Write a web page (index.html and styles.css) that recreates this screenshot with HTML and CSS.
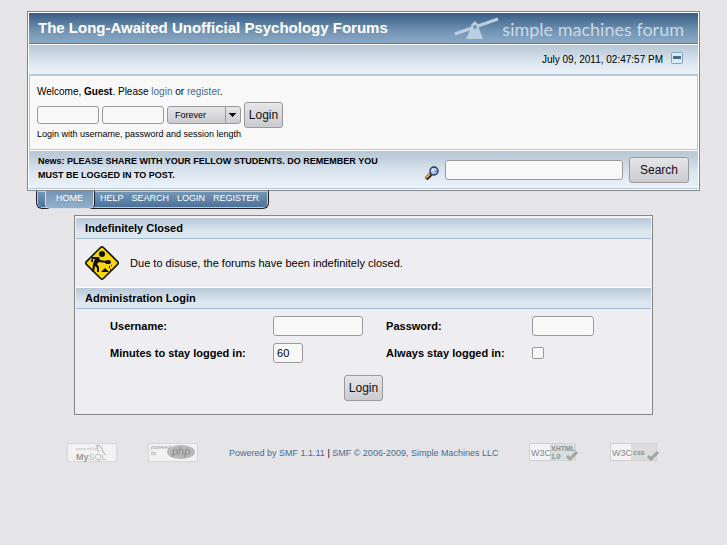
FILE: index.html
```html
<!DOCTYPE html>
<html lang="en">
<head>
    <meta charset="UTF-8">
    <meta name="viewport" content="width=device-width, initial-scale=1.0">
    <title>The Long-Awaited Unofficial Psychology Forums</title>
    <link rel="stylesheet" href="styles.css">
</head>
<body>
    <!-- Header -->
    <div class="tborder header">
        <div class="catbg">
            <h1>The Long-Awaited Unofficial Psychology Forums</h1>
            <div class="smf-logo">
                <svg width="46" height="24" viewBox="0 0 46 24" aria-hidden="true">
                    <path d="M1 17 L44 2" stroke="#bccfe0" stroke-width="3"/>
                    <path d="M18 9 L24 9 L29 22 L12 22 Z" fill="#bccfe0"/>
                    <path d="M17 8 L21 4 L24 8 Z" fill="#bccfe0"/>
                    <circle cx="21" cy="10" r="4" fill="#bccfe0"/>
                    <circle cx="21" cy="10" r="2" fill="#7294b3"/>
                </svg>
                <span>simple machines forum</span>
            </div>
        </div>
        <div class="titlebg2 datebar">
            <span>July 09, 2011, 02:47:57 PM</span>
            <a href="#" class="upshrink" aria-label="Shrink or expand the header">
                <svg width="12" height="12" viewBox="0 0 12 12">
                    <rect x="0.5" y="0.5" width="11" height="11" rx="1" fill="#dce8f3" stroke="#83a2bd"/>
                    <rect x="2" y="4" width="8" height="3" fill="#476c8e"/>
                </svg>
            </a>
        </div>
        <form class="userarea" action="#">
            <p class="welcome">Welcome, <b>Guest</b>. Please <a href="#">login</a> or <a href="#">register</a>.</p>
            <div class="quicklogin">
                <input type="text" class="text quick" aria-label="Username">
                <input type="password" class="text quick" aria-label="Password">
                <select aria-label="Session length">
                    <option>Forever</option>
                </select>
                <button type="submit" class="btn">Login</button>
            </div>
            <p class="hint">Login with username, password and session length</p>
        </form>
        <div class="titlebg2 newsbar">
            <p class="news">News: PLEASE SHARE WITH YOUR FELLOW STUDENTS. DO REMEMBER YOU MUST BE LOGGED IN TO POST.</p>
            <form class="search" action="#">
                <svg width="14" height="20" viewBox="0 -6 14 20" aria-hidden="true">
                    <path d="M1 13 L6 8" stroke="#222" stroke-width="4"/>
                    <path d="M1 12 L5 8" stroke="#e8a14c" stroke-width="2"/>
                    <circle cx="9" cy="5" r="4" fill="#a9c9f3" stroke="#26354f" stroke-width="1.4"/>
                    <path d="M7 5 Q7 3 9 3" stroke="#fff" fill="none"/>
                    <path d="M10 7 L12 4" stroke="#4d7bd1"/>
                </svg>
                <input type="text" class="text query" aria-label="Search">
                <button type="submit" class="btn search-btn">Search</button>
            </form>
        </div>
    </div>

    <!-- Menu -->
    <nav class="menu">
        <a href="#" class="active">HOME</a>
        <a href="#">HELP</a>
        <a href="#">SEARCH</a>
        <a href="#">LOGIN</a>
        <a href="#">REGISTER</a>
    </nav>

    <!-- Maintenance notice -->
    <form class="tborder maintenance" action="#">
        <h2 class="titlebg">Indefinitely Closed</h2>
        <div class="notice">
            <svg width="36" height="36" viewBox="0 0 36 36" aria-hidden="true">
                <rect x="6" y="6" width="24" height="24" rx="2" transform="rotate(45 18 18)" fill="#f7d708" stroke="#111" stroke-width="1.6"/>
                <circle cx="18" cy="9" r="3" fill="#111"/>
                <path d="M8 12 H15 L16 15 L22 16 V18 L15 17 L13 19 L15 22 V27 H13 V23 L11 21 L10 27 H8 L9 19 L11 14 H9 V17 H7 Z" fill="#111"/>
                <ellipse cx="24" cy="17" rx="3" ry="2" fill="#111"/>
                <path d="M17 27 L19 25 L21 23 L23 25 L25 27 Z" fill="#111"/>
                <path d="M25 21h1v2h-1z M27 20h1v1h-1z M26 24h1v1h-1z" fill="#111"/>
            </svg>
            <p>Due to disuse, the forums have been indefinitely closed.</p>
        </div>
        <h2 class="titlebg">Administration Login</h2>
        <div class="fields">
            <label for="user">Username:</label>
            <div><input type="text" id="user" class="text user"></div>
            <label for="passwrd">Password:</label>
            <div><input type="password" id="passwrd" class="text passwrd"></div>
            <label for="minutes">Minutes to stay logged in:</label>
            <div><input type="text" id="minutes" class="text minutes" value="60"></div>
            <label for="always">Always stay logged in:</label>
            <div><input type="checkbox" id="always" class="check"></div>
        </div>
        <div class="submit">
            <button type="submit" class="btn">Login</button>
        </div>
    </form>

    <!-- Footer -->
    <footer class="footer">
        <a href="#" aria-label="Powered by MySQL">
            <svg width="50" height="19" viewBox="0 0 50 19">
                <rect x="0.5" y="0.5" width="49" height="18" fill="#f2f2f3" stroke="#d6d6d8"/>
                <text x="9" y="7" class="small" fill="#bbb">powered by</text>
                <text x="9" y="17" class="mysql"><tspan font-weight="bold" fill="#999">My</tspan><tspan fill="#bbb">SQL</tspan></text>
                <path d="M30 2 Q35 3 36 9 L39 12 M30 2 Q30 7 32 9" stroke="#aaa" fill="none"/>
            </svg>
        </a>
        <a href="#" aria-label="Powered by PHP">
            <svg width="50" height="19" viewBox="0 0 50 19">
                <rect x="0.5" y="0.5" width="49" height="18" fill="#f2f2f3" stroke="#d6d6d8"/>
                <text x="3" y="6" class="tiny" fill="#999">powered</text>
                <text x="3" y="12" class="tiny" fill="#999">by</text>
                <ellipse cx="33" cy="9" rx="14" ry="7" fill="#b8b8b8"/>
                <text x="24" y="12" class="php">php</text>
            </svg>
        </a>
        <p class="copyright"><a href="#">Powered by SMF 1.1.11</a> | <a href="#">SMF © 2006-2009, Simple Machines LLC</a></p>
        <a href="#" aria-label="Valid XHTML 1.0">
            <svg width="50" height="19" viewBox="0 0 50 19">
                <rect x="0.5" y="0.5" width="46" height="17" fill="#dcdcdd" stroke="#d2d2d4"/>
                <rect x="1" y="1" width="20" height="16" fill="#f2f2f3"/>
                <text x="2" y="13" class="w3c">W3C</text>
                <text x="22" y="8" class="badge">XHTML</text>
                <text x="22" y="16" class="badge">1.0</text>
                <path d="M38 13 L41 16 L48 9" stroke="#a0a5a0" stroke-width="3" fill="none"/>
            </svg>
        </a>
        <a href="#" aria-label="Valid CSS">
            <svg width="50" height="19" viewBox="0 0 50 19">
                <rect x="0.5" y="0.5" width="46" height="17" fill="#dcdcdd" stroke="#d2d2d4"/>
                <rect x="1" y="1" width="20" height="16" fill="#f2f2f3"/>
                <text x="2" y="13" class="w3c">W3C</text>
                <text x="23" y="12" class="badge css">css</text>
                <path d="M38 13 L41 16 L48 9" stroke="#a0a5a0" stroke-width="3" fill="none"/>
            </svg>
        </a>
    </footer>
</body>
</html>
```

FILE: styles.css
```css
* {
    margin: 0;
    padding: 0;
    box-sizing: border-box;
}

body {
    background: #e5e5e8;
    padding: 11px 27px;
    font-family: "Liberation Sans", Arial, sans-serif;
    font-size: 11px;
    color: #000;
}

a {
    color: #476c8e;
    text-decoration: none;
}

.tborder {
    border: 1px solid #868686;
    padding: 1px;
    background: #fff;
}

/* Header */
.catbg {
    height: 31px;
    padding: 0 14px 2px 9px;
    display: flex;
    align-items: center;
    justify-content: space-between;
    background: linear-gradient(#375d83, #7294b4 60%, #8aa9c5);
    border-bottom: 1px solid #5a7c9a;
    color: #fff;
}

.catbg h1 {
    font-size: 15px;
}

.smf-logo {
    padding-top: 4px;
    display: flex;
    align-items: center;
    gap: 2px;
    font-family: Lato, sans-serif;
    font-size: 18px;
    color: #c9d9e7;
}

.titlebg2 {
    background: linear-gradient(#b6c6d4, #dce6f0 60%, #ebf2f9);
    border-bottom: 1px solid #b4c8da;
}

.datebar {
    height: 30px;
    margin-top: 1px;
    padding: 0 15px 0 8px;
    display: flex;
    align-items: center;
    justify-content: flex-end;
    gap: 8px;
    font-size: 10px;
}

.upshrink {
    padding-bottom: 4px;
}

.upshrink svg {
    display: block;
}

.userarea {
    height: 75px;
    padding: 10px 7px 0;
    border: 1px solid #c5c5c5;
    background: #f8f8f8;
}

.welcome {
    font-size: 10px;
    line-height: 12px;
}

.quicklogin {
    display: flex;
    align-items: center;
    gap: 3px;
    margin-top: 4px;
}

.hint {
    font-size: 9px;
    line-height: 12px;
}

.text {
    height: 20px;
    padding: 0 3px;
    border: 1px solid #999;
    border-radius: 3px;
    background: #f8f8f8;
    font-family: inherit;
    font-size: 11px;
}

.quick {
    width: 62px;
    height: 18px;
}

select {
    width: 74px;
    height: 18px;
    padding: 0 7px;
    border: 1px solid #999;
    border-radius: 3px;
    appearance: none;
    /* arrow, divider, face */
    background:
        linear-gradient(to bottom left, #111 50%, transparent 50%) right 7px center / 4px 4px no-repeat,
        linear-gradient(to bottom right, #111 50%, transparent 50%) right 3px center / 4px 4px no-repeat,
        linear-gradient(#999, #999) right 14px center / 1px 100% no-repeat,
        linear-gradient(#e6e6e9, #cbcbd0);
    font-family: inherit;
    font-size: 9px;
}

.btn {
    width: 39px;
    height: 26px;
    border: 1px solid #999;
    border-radius: 3px;
    background: linear-gradient(#e6e6e9, #cbcbd0);
    font-family: inherit;
    font-size: 12px;
    color: #111;
}

.newsbar {
    height: 38px;
    margin-top: 1px;
    padding: 0 9px;
    display: flex;
    align-items: center;
    justify-content: space-between;
}

.news {
    width: 360px;
    padding-bottom: 3px;
    font-size: 9px;
    line-height: 14px;
    font-weight: bold;
}

.search {
    display: flex;
    align-items: center;
    gap: 6px;
}

.query {
    width: 178px;
}

.search-btn {
    width: 60px;
}

/* Menu */
.menu {
    width: fit-content;
    height: 18px;
    margin-left: 9px;
    padding: 0 9px 0 8px;
    display: flex;
    gap: 8px;
    border: 1px solid #222;
    border-top: none;
    border-radius: 0 0 6px 6px;
    box-shadow: inset 0 0 0 1px #b9cbdb;
    background: linear-gradient(#7698b6, #47709a);
    font-size: 9px;
    line-height: 15px;
}

.menu a {
    color: #fff;
}

.menu .active {
    height: 18px;
    margin-right: -2px;
    padding: 0 10px;
    border: 1px solid #d5e0ea;
    border-top: none;
    border-radius: 0 0 5px 5px;
    box-shadow: 1px 0 0 #222;
    background: linear-gradient(#7594b3, #92b0ca);
}

/* Maintenance notice */
.maintenance {
    width: 86%;
    margin: 6px auto 0;
    background: #eeeef2;
}

.titlebg {
    height: 22px;
    padding-left: 9px;
    border-top: 1px solid #fff;
    border-bottom: 1px solid #a3bace;
    background: linear-gradient(#b8c8d8, #dde7f0 70%);
    font-size: 11px;
    line-height: 20px;
}

.notice {
    height: 48px;
    padding: 0 8px;
    display: flex;
    align-items: center;
    gap: 10px;
}

.fields {
    padding: 7px 0 0 34px;
    display: grid;
    grid-template-columns: 163px 113px 146px 1fr;
    row-gap: 7px;
    align-items: center;
    font-weight: bold;
}

.fields div {
    height: 20px;
    display: flex;
    align-items: center;
}

.user {
    width: 90px;
}

.passwrd {
    width: 62px;
}

.minutes {
    width: 30px;
}

.check {
    width: 12px;
    height: 12px;
    border: 1px solid #999;
    border-radius: 2px;
    appearance: none;
    background: #f8f8f8;
}

.submit {
    padding: 12px 0;
    text-align: center;
}

.submit .btn {
    display: block;
    margin: 0 auto;
}

/* Footer */
.footer {
    margin-top: 28px;
    padding: 0 40px;
    display: flex;
    align-items: center;
    gap: 31px;
}

.footer svg {
    display: block;
}

.copyright {
    flex: 1;
    font-size: 9px;
    text-align: center;
    white-space: nowrap;
}

.tiny {
    font-size: 5px;
    font-style: italic;
}

.small {
    font-size: 4px;
}

.mysql {
    font-size: 9px;
}

.php {
    font-size: 11px;
    font-style: italic;
    fill: #888;
}

.w3c {
    font-size: 9px;
    fill: #888;
}

.badge {
    font-size: 7px;
    font-weight: bold;
    fill: #8d938d;
}
```
